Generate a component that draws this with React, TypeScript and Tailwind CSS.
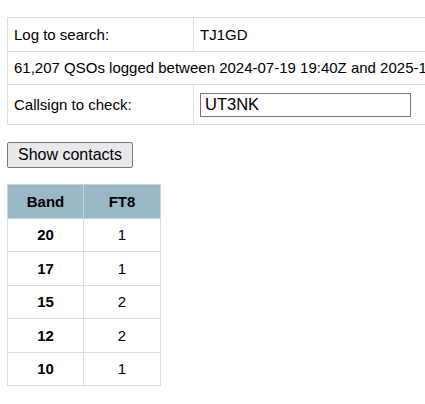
const bands = [
  { band: "20", ft8: 1 },
  { band: "17", ft8: 1 },
  { band: "15", ft8: 2 },
  { band: "12", ft8: 2 },
  { band: "10", ft8: 1 },
]

export default function App() {
  return (
    <div className="h-[404px] w-[425px] overflow-hidden bg-white px-[7px] pt-[17px] font-['Liberation_Sans',Arial,sans-serif] text-[15px] leading-[17.5px] text-black">
      <table className="border-collapse whitespace-nowrap">
        <tbody>
          <tr>
            <td className="w-[186px] border border-[#ddd] px-[6px] py-[7.5px]">Log to search:</td>
            <td className="border border-[#ddd] px-[6px] py-[7.5px]">TJ1GD</td>
          </tr>
          <tr>
            <td colSpan={2} className="border border-[#ddd] px-[6px] py-[7.5px]">
              61,207 QSOs logged between 2024-07-19 19:40Z and 2025-10-14 08:22Z
            </td>
          </tr>
          <tr>
            <td className="border border-[#ddd] px-[6px] py-[7.5px]">Callsign to check:</td>
            <td className="border border-[#ddd] py-[7.5px] pl-[6px] pr-[90px]">
              <input
                defaultValue="UT3NK"
                className="block h-[24px] w-[211px] border border-[#767676] px-[4px] text-[16.5px] leading-[20px] text-black outline-none"
              />
            </td>
          </tr>
        </tbody>
      </table>

      <button className="mt-[17px] block rounded-[2px] border border-[#767676] bg-[#e9e9ed] px-[10px] py-[3px] text-[16px] leading-[17.5px]">
        Show contacts
      </button>

      <table className="mt-[16.5px] border-collapse text-center">
        <thead>
          <tr className="bg-[#9ab8c5]">
            <th className="w-[76px] border border-[#c9d3d8] py-[7.5px] font-bold">Band</th>
            <th className="w-[77px] border border-[#c9d3d8] py-[7.5px] font-bold">FT8</th>
          </tr>
        </thead>
        <tbody>
          {bands.map((b) => (
            <tr key={b.band}>
              <td className="border border-[#ddd] py-[7.5px] font-bold">{b.band}</td>
              <td className="border border-[#ddd] py-[7.5px]">{b.ft8}</td>
            </tr>
          ))}
        </tbody>
      </table>
    </div>
  )
}
